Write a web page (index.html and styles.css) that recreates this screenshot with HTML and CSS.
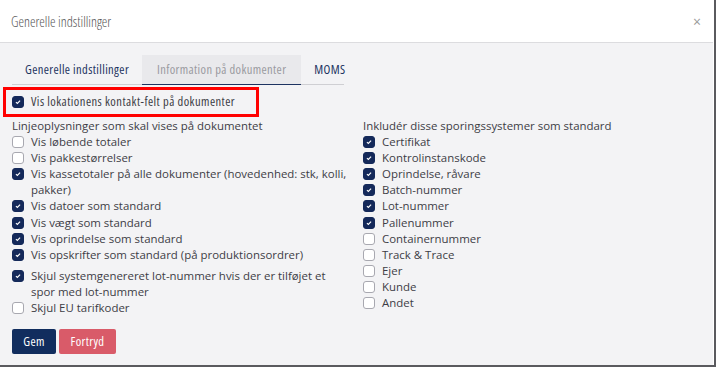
FILE: index.html
```html
<!DOCTYPE html>
<html lang="da">

<head>
    <meta charset="UTF-8">
    <title>Generelle indstillinger</title>
    <link rel="stylesheet" href="styles.css">
</head>

<body>
    <div class="dialog">
        <!-- Topbar -->
        <div class="dialog-header">
            <span class="dialog-title">Generelle indstillinger</span>
            <span class="luk">&times;</span>
        </div>

        <div class="dialog-body">
            <!-- Faneblade -->
            <div class="faner">
                <span class="fane">Generelle indstillinger</span>
                <span class="fane aktiv">Information på dokumenter</span>
                <span class="fane">MOMS</span>
            </div>

            <div class="markeret">
                <label class="valg"><input type="checkbox" checked> Vis lokationens kontakt-felt på dokumenter</label>
            </div>

            <div class="kolonner">
                <div class="kolonne venstre">
                    <div class="overskrift">Linjeoplysninger som skal vises på dokumentet</div>
                    <label class="valg"><input type="checkbox"> Vis løbende totaler</label>
                    <label class="valg"><input type="checkbox"> Vis pakkestørrelser</label>
                    <label class="valg"><input type="checkbox" checked> <span>Vis kassetotaler på alle dokumenter (hovedenhed: stk, kolli, pakker)</span></label>
                    <label class="valg"><input type="checkbox" checked> Vis datoer som standard</label>
                    <label class="valg"><input type="checkbox" checked> Vis vægt som standard</label>
                    <label class="valg"><input type="checkbox" checked> Vis oprindelse som standard</label>
                    <label class="valg"><input type="checkbox" checked> Vis opskrifter som standard (på produktionsordrer)</label>
                    <label class="valg luft"><input type="checkbox" checked> <span>Skjul systemgenereret lot-nummer hvis der er tilføjet et spor med lot-nummer</span></label>
                    <label class="valg"><input type="checkbox"> Skjul EU tarifkoder</label>
                </div>

                <div class="kolonne">
                    <div class="overskrift">Inkludér disse sporingssystemer som standard</div>
                    <label class="valg"><input type="checkbox" checked> Certifikat</label>
                    <label class="valg"><input type="checkbox" checked> Kontrolinstanskode</label>
                    <label class="valg"><input type="checkbox" checked> Oprindelse, råvare</label>
                    <label class="valg"><input type="checkbox" checked> Batch-nummer</label>
                    <label class="valg"><input type="checkbox" checked> Lot-nummer</label>
                    <label class="valg"><input type="checkbox" checked> Pallenummer</label>
                    <label class="valg"><input type="checkbox"> Containernummer</label>
                    <label class="valg"><input type="checkbox"> Track &amp; Trace</label>
                    <label class="valg"><input type="checkbox"> Ejer</label>
                    <label class="valg"><input type="checkbox"> Kunde</label>
                    <label class="valg"><input type="checkbox"> Andet</label>
                </div>
            </div>

            <div class="knapper">
                <button class="knap gem">Gem</button>
                <button class="knap fortryd">Fortryd</button>
            </div>
        </div>
    </div>
</body>

</html>
```

FILE: styles.css
```css
body {
    margin: 0;
    background-color: #5a5a5e;
    font-family: 'Open Sans', 'Noto Sans', sans-serif;
    color: #3d3d45;
}

.dialog {
    width: 713px;
    height: 365px;
    background: #f3f3f5;
    border-right: 1px solid #fff;
    overflow: hidden;
}

.dialog-header {
    height: 43px;
    background: #fff;
    border-bottom: 1px solid #dcdcdf;
    display: flex;
    align-items: center;
    justify-content: space-between;
    padding: 0 11px;
    box-sizing: border-box;
}

.dialog-title {
    font-size: 14px;
    font-weight: 300;
    font-stretch: condensed;
    color: #555;
}

.luk {
    font-size: 14px;
    color: #999;
    margin-right: 1px;
}

.dialog-body {
    padding: 12px 12px 0 12px;
}

/* Faneblade */
.faner {
    display: flex;
    width: 332px;
    border-bottom: 1px solid #cfcfd3;
}

.fane {
    font-size: 12.5px;
    font-stretch: condensed;
    letter-spacing: 0.38px;
    color: #1d3361;
    padding: 6px 13px 6px 13px;
    white-space: nowrap;
}

.fane.aktiv {
    background: #e9e9ec;
    color: #9a9aa0;
    border-bottom: 1px solid #1d3361;
    margin-bottom: -1px;
    padding: 6px 15px;
}

/* Rød ramme */
.markeret {
    margin: 2px 0 0 -9px;
    width: 238px;
    border: 3px solid #f00;
    padding: 4px 6px 4px 6px;
}

.markeret .valg {
    font-size: 12.5px;
    font-stretch: condensed;
    letter-spacing: 0.45px;
    white-space: nowrap;
}

.kolonner {
    display: grid;
    grid-template-columns: 351px 1fr;
    margin-top: 1px;
}

.venstre {
    padding-right: 12px;
}

.overskrift {
    font-size: 11.45px;
    line-height: 16px;
}

.valg {
    display: flex;
    align-items: flex-start;
    gap: 7px;
    font-size: 11.45px;
    line-height: 16.1px;
}

.valg.luft {
    margin-top: 5px;
}

.valg input {
    appearance: none;
    -webkit-appearance: none;
    flex: 0 0 auto;
    width: 12px;
    height: 12px;
    margin: 2px 0 0 0;
    border: 1px solid #a8a8b0;
    border-radius: 3px;
    background: #fff;
    box-sizing: border-box;
}

.valg input:checked {
    background: #14295a;
    border-color: #14295a;
    background-image: url("data:image/svg+xml,%3Csvg xmlns='http://www.w3.org/2000/svg' viewBox='0 0 12 12'%3E%3Cpath d='M3.5 6.2l1.7 1.5 3.3-3.3' fill='none' stroke='%23fff' stroke-width='1.4'/%3E%3C/svg%3E");
}

/* Knapper */
.knapper {
    display: flex;
    gap: 3px;
    margin-top: 13px;
}

.knap {
    font-family: inherit;
    font-size: 12.5px;
    font-stretch: condensed;
    letter-spacing: 0.4px;
    color: #fff;
    border: none;
    border-radius: 2px;
    height: 25px;
    padding: 0;
}

.gem {
    width: 44px;
    background: #112d5e;
}

.fortryd {
    width: 57px;
    background: #d95b69;
}
```
